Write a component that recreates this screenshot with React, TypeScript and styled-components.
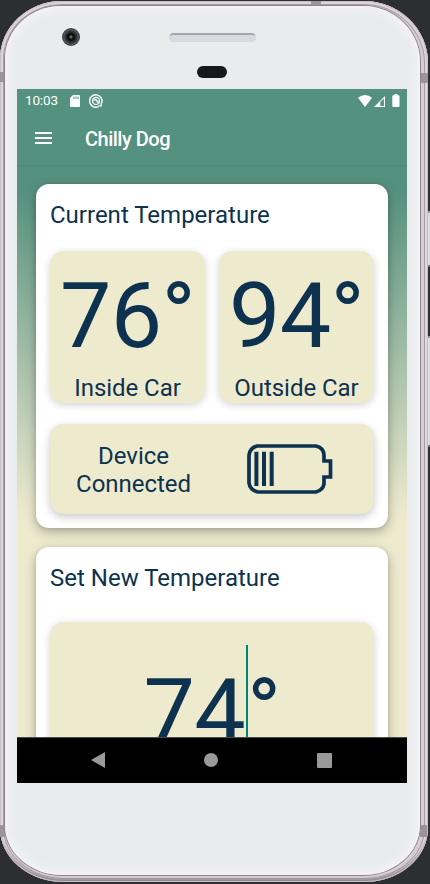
import React from "react";
import styled, { createGlobalStyle } from "styled-components";

const navy = "#0d324f";
const cream = "#eeeace";
const teal = "#55917f";

const GlobalStyle = createGlobalStyle`
  *, *::before, *::after { box-sizing: border-box; }
  html, body { margin: 0; background: #2d2e30; overflow: hidden; }
  body { font-family: Roboto, "Liberation Sans", sans-serif; }
`;

const Desk = styled.div`
  position: relative;
  width: 430px;
  height: 884px;
  padding: 1px 0 0 0;
  overflow: hidden;
  background: #2d2e30;
`;

const Rim = styled.div`
  position: relative;
  width: 428px;
  height: 881px;
  padding: 5px 8px 7px 5px;
  border-radius: 62px 64px 64px 64px / 58px 62px 54px 54px;
  background: #d5cdd1;
  box-shadow: inset 0 0 0 1px #c8bfc4, inset 0 -4px 2px -1px #8f868c,
    inset 0 0 0 3px #ddd5d9, inset 0 0 0 4px #a79ea3;
`;

const Face = styled.div`
  position: relative;
  display: flex;
  flex-direction: column;
  height: 869px;
  padding: 0 13px 0 12px;
  border-radius: 56px 57px 57px 57px / 53px 56px 50px 50px;
  background: #eaebed;
  box-shadow: inset 0 0 8px 3px #f5f5f8, 0 0 0 1px #8e858a;
`;

const TopBezel = styled.div`
  display: grid;
  grid-template-columns: 35px 72px 1fr;
  height: 83px;
  flex: none;
  padding-left: 45px;
`;

const Camera = styled.div`
  width: 18px;
  height: 18px;
  margin-top: 22px;
  border-radius: 50%;
  background: radial-gradient(circle at 50% 50%, #756b3c 0 1px, #101113 2px 4px, #303238 5px 6px, #55575b 7px, #3a3b3e 9px);
`;

const Earpiece = styled.div`
  grid-column: 3;
  display: flex;
  flex-direction: column;
  align-items: center;
  width: 87px;
`;

const Speaker = styled.div`
  width: 87px;
  height: 9px;
  margin: 27px 0 24px;
  border-radius: 5px;
  border: 1px solid #d5d8dd;
  border-top: 2px solid #a3a8b0;
  background: #d7dade;
`;

const Sensor = styled.div`
  width: 30px;
  height: 12px;
  margin-right: 1px;
  border-radius: 6px;
  background: #17181b;
`;

const Screen = styled.div`
  display: flex;
  flex-direction: column;
  width: 390px;
  height: 694px;
  flex: none;
  overflow: hidden;
  background: ${teal};
`;

const TopBar = styled.header`
  position: relative;
  z-index: 1;
  height: 76px;
  flex: none;
  color: #fff;
  background: ${teal};
  box-shadow: 0 1px 2px rgba(0, 0, 0, 0.08);
`;

const StatusBar = styled.div`
  display: flex;
  align-items: center;
  height: 23px;
  padding: 0 7px 0 8px;
  font-size: 13.5px;
`;

const Clock = styled.span`
  width: 45px;
  margin-top: -1px;
  letter-spacing: -0.15px;
`;

const StatusSvg = styled.svg<{ $gap?: number }>`
  flex: none;
  margin-left: ${(p) => p.$gap ?? 0}px;
`;

const StatusEnd = styled.div`
  display: flex;
  align-items: center;
  margin-left: auto;
`;

const Toolbar = styled.div`
  display: flex;
  align-items: center;
  height: 52px;
  padding: 0 0 0 18px;
`;

const Title = styled.h1`
  margin: 1px 0 0 33px;
  font-size: 20px;
  font-weight: 500;
  line-height: 24px;
  letter-spacing: -0.5px;
`;

const Content = styled.main`
  flex: 1;
  display: flex;
  flex-direction: column;
  gap: 19px;
  min-height: 0;
  overflow: hidden;
  padding: 19px 19px 0;
  background: linear-gradient(${teal} 25px, ${cream} 350px);
`;

const Card = styled.section<{ $height: number }>`
  height: ${(p) => p.$height}px;
  flex: none;
  padding: 0 14px;
  border-radius: 13px;
  background: #fff;
  color: ${navy};
  box-shadow: 0 4px 12px rgba(0, 0, 0, 0.27), 0 1px 4px rgba(0, 0, 0, 0.1);
`;

const Heading = styled.h2<{ $height: number }>`
  height: ${(p) => p.$height}px;
  margin: 0;
  padding: 17px 0 0 0;
  font-size: 24px;
  line-height: 28px;
  font-weight: 400;
`;

const TileRow = styled.div`
  display: flex;
  gap: 14px;
  height: 173px;
  margin: 0 -14px;
  padding: 0 14px;
  clip-path: inset(-14px 0 14px 0);
`;

const Tile = styled.div<{ $height: number }>`
  display: flex;
  flex: 1;
  flex-direction: column;
  align-items: center;
  height: ${(p) => p.$height}px;
  border-radius: 14px;
  background: ${cream};
  box-shadow: 0 2px 8px rgba(0, 0, 0, 0.18);
`;

const Reading = styled.div<{ $top: number }>`
  display: flex;
  margin-top: ${(p) => p.$top}px;
  font-size: 91.5px;
  line-height: 108px;
  letter-spacing: -0.7px;
`;

const Caption = styled.div`
  margin-top: 4px;
  font-size: 24px;
  line-height: 28px;
  letter-spacing: -0.05px;
`;

const DeviceTile = styled.div`
  display: grid;
  grid-template-columns: 167px 1fr;
  align-items: center;
  height: 90px;
  border-radius: 14px;
  background: ${cream};
  box-shadow: 0 3px 9px rgba(0, 0, 0, 0.22);
`;

const DeviceText = styled.div`
  padding-top: 1px;
  text-align: center;
  font-size: 24px;
  line-height: 28px;
  letter-spacing: -0.05px;
`;

const BatterySvg = styled.svg`
  justify-self: start;
  margin-left: 30px;
`;

const Caret = styled.span`
  width: 2px;
  height: 120px;
  margin-top: -13px;
  margin-left: 1px;
  margin-right: -1px;
  background: #008577;
`;

const NavBar = styled.nav`
  display: flex;
  justify-content: space-between;
  align-items: center;
  height: 46px;
  flex: none;
  padding: 0 75px 1px 74px;
  border-top: 1px solid #4d4b42;
  background: #000;
`;

const Band = styled.span<{ $x: number; $y: number; $w: number; $h: number }>`
  position: absolute;
  left: ${(p) => p.$x}px;
  top: ${(p) => p.$y}px;
  width: ${(p) => p.$w}px;
  height: ${(p) => p.$h}px;
  background: #9d9499;
`;

const SideKey = styled(Band)`
  border-top: 2px solid #9b999b;
  border-bottom: 2px solid #777;
  background: #dddcdf;
`;

function StatusIcons() {
  return (
    <StatusBar>
      <Clock>10:03</Clock>
      <StatusSvg width="10" height="12" viewBox="0 0 10 12">
        <path d="M3 0H9Q10 0 10 1V11Q10 12 9 12H1Q0 12 0 11V3Z" fill="#fff" />
        <path d="M3.9 1.5V4M6 1.5V4M8.1 1.5V4" stroke={teal} strokeWidth="1" />
      </StatusSvg>
      <StatusSvg $gap={9} width="14" height="14" viewBox="0 0 14 14" fill="none" stroke="#fff">
        <path d="M9.5 12.6A6.2 6.2 0 1 1 12.6 9.2" strokeWidth="1.4" />
        <circle cx="7" cy="6.9" r="3.5" strokeWidth="1.3" />
        <path d="M4.5 6.4L6.6 5.4L10 9.2" strokeWidth="1.5" />
        <path d="M9.3 11.9H12.2V9" strokeWidth="1.2" />
      </StatusSvg>
      <StatusEnd>
        <StatusSvg width="14" height="12" viewBox="0 0 14 12">
          <path d="M0 2.7Q7 -2.5 14 2.7L7 12Z" fill="#fff" />
        </StatusSvg>
        <StatusSvg $gap={2} width="11" height="12" viewBox="0 0 11 12">
          <path d="M0 12L11 1V12Z" fill="#fff" />
          <path d="M6.3 7L9.9 3.6V10.9H6.3Z" fill={teal} />
        </StatusSvg>
        <StatusSvg $gap={7} width="8" height="13" viewBox="0 0 8 13">
          <path d="M2.4 0H5.6V1.3H6.5Q7.5 1.3 7.5 2.3V12Q7.5 13 6.5 13H1.2Q0.3 13 0.3 12V2.3Q0.3 1.3 1.2 1.3H2.4Z" fill="#fff" />
        </StatusSvg>
      </StatusEnd>
    </StatusBar>
  );
}

function BatteryIcon() {
  return (
    <BatterySvg width="86" height="50" viewBox="0 0 86 50" fill="none" stroke={navy}>
      <path
        d="M10 2H69Q77 4 77 11V17H83.5V33H77V40Q76 46 69 48H11Q3 46 2 39V11Q3 4 10 2Z"
        strokeWidth="3.7"
      />
      <path d="M9.4 7.7V42M17 7.7V42M24.7 7.7V42" strokeWidth="4" />
    </BatterySvg>
  );
}

export default function App() {
  return (
    <>
      <GlobalStyle />
      <Desk>
        <SideKey $x={427} $y={211} $w={3} $h={56} />
        <SideKey $x={427} $y={336} $w={3} $h={111} />
        <Rim>
          <Band $x={311} $y={0} $w={10} $h={5} />
          <Band $x={0} $y={71} $w={5} $h={10} />
          <Band $x={420} $y={72} $w={8} $h={10} />
          <Band $x={0} $y={824} $w={5} $h={12} />
          <Band $x={420} $y={824} $w={7} $h={12} />
          <Face>
            <TopBezel>
              <Camera />
              <Earpiece>
                <Speaker />
                <Sensor />
              </Earpiece>
            </TopBezel>
            <Screen>
              <TopBar>
                <StatusIcons />
                <Toolbar>
                  <svg width="17" height="12" viewBox="0 0 17 12">
                    <path d="M0 1H17M0 6H17M0 11H17" stroke="#fff" strokeWidth="2" />
                  </svg>
                  <Title>Chilly Dog</Title>
                </Toolbar>
              </TopBar>
              <Content>
                <Card $height={344}>
                  <Heading $height={67}>Current Temperature</Heading>
                  <TileRow>
                    <Tile $height={152}>
                      <Reading $top={11}>76°</Reading>
                      <Caption>Inside Car</Caption>
                    </Tile>
                    <Tile $height={152}>
                      <Reading $top={11}>94°</Reading>
                      <Caption>Outside Car</Caption>
                    </Tile>
                  </TileRow>
                  <DeviceTile>
                    <DeviceText>
                      Device
                      <br />
                      Connected
                    </DeviceText>
                    <BatteryIcon />
                  </DeviceTile>
                </Card>
                <Card $height={344}>
                  <Heading $height={75}>Set New Temperature</Heading>
                  <Tile $height={240}>
                    <Reading $top={36}>
                      74
                      <Caret />°
                    </Reading>
                  </Tile>
                </Card>
              </Content>
              <NavBar>
                <svg width="14" height="16" viewBox="0 0 14 16">
                  <path d="M0 8L14 0V16Z" fill="#999" />
                </svg>
                <svg width="14" height="14" viewBox="0 0 14 14">
                  <circle cx="7" cy="7" r="7" fill="#999" />
                </svg>
                <svg width="15" height="15" viewBox="0 0 15 15">
                  <rect width="15" height="15" rx="1" fill="#999" />
                </svg>
              </NavBar>
            </Screen>
          </Face>
        </Rim>
      </Desk>
    </>
  );
}
